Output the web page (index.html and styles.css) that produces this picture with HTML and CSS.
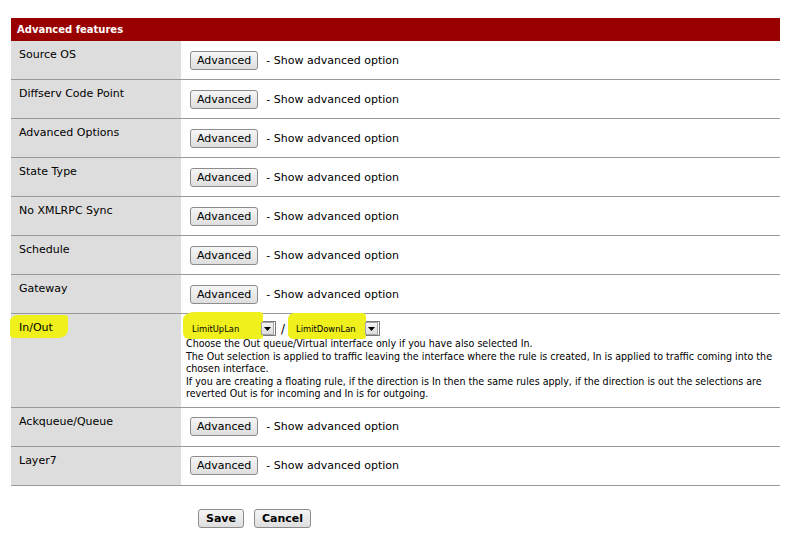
FILE: index.html
```html
<!DOCTYPE html>
<html>
<head>
<meta charset="utf-8">
<title>Advanced features</title>
<link rel="stylesheet" href="styles.css">
</head>
<body>
<div class="page">
  <div class="panel">
    <div class="head">Advanced features</div>

    <div class="row">
      <div class="label">Source OS</div>
      <div class="value"><button class="btn">Advanced</button><span class="hint">- Show advanced option</span></div>
    </div>
    <div class="row">
      <div class="label">Diffserv Code Point</div>
      <div class="value"><button class="btn">Advanced</button><span class="hint">- Show advanced option</span></div>
    </div>
    <div class="row">
      <div class="label">Advanced Options</div>
      <div class="value"><button class="btn">Advanced</button><span class="hint">- Show advanced option</span></div>
    </div>
    <div class="row">
      <div class="label">State Type</div>
      <div class="value"><button class="btn">Advanced</button><span class="hint">- Show advanced option</span></div>
    </div>
    <div class="row">
      <div class="label">No XMLRPC Sync</div>
      <div class="value"><button class="btn">Advanced</button><span class="hint">- Show advanced option</span></div>
    </div>
    <div class="row">
      <div class="label">Schedule</div>
      <div class="value"><button class="btn">Advanced</button><span class="hint">- Show advanced option</span></div>
    </div>
    <div class="row">
      <div class="label">Gateway</div>
      <div class="value"><button class="btn">Advanced</button><span class="hint">- Show advanced option</span></div>
    </div>

    <div class="row row-tall">
      <div class="label label-hl"><span class="hl hl-label"></span><span class="label-text">In/Out</span></div>
      <div class="value value-top">
        <div class="selects">
          <span class="sel sel-1"><span class="hl hl-sel1"></span><span class="sel-text">LimitUpLan</span><span class="sel-arrow"><svg width="7" height="4" viewBox="0 0 7 4"><path d="M0 0H7L3.5 4Z" fill="#000"/></svg></span></span>
          <span class="slash">/</span>
          <span class="sel sel-2"><span class="hl hl-sel2"></span><span class="sel-text">LimitDownLan</span><span class="sel-arrow"><svg width="7" height="4" viewBox="0 0 7 4"><path d="M0 0H7L3.5 4Z" fill="#000"/></svg></span></span>
        </div>
        <div class="desc">Choose the Out queue/Virtual interface only if you have also selected In.<br>The Out selection is applied to traffic leaving the interface where the rule is created, In is applied to traffic coming into the<br>chosen interface.<br>If you are creating a floating rule, if the direction is In then the same rules apply, if the direction is out the selections are<br>reverted Out is for incoming and In is for outgoing.</div>
      </div>
    </div>

    <div class="row">
      <div class="label">Ackqueue/Queue</div>
      <div class="value"><button class="btn">Advanced</button><span class="hint">- Show advanced option</span></div>
    </div>
    <div class="row">
      <div class="label">Layer7</div>
      <div class="value"><button class="btn">Advanced</button><span class="hint">- Show advanced option</span></div>
    </div>

    <div class="actions">
      <button class="btn btn-bold">Save</button>
      <button class="btn btn-bold">Cancel</button>
    </div>
  </div>
</div>
</body>
</html>
```

FILE: styles.css
```css
html, body {
  margin: 0;
  padding: 0;
  background: #ffffff;
}

body {
  font-family: "DejaVu Sans", Verdana, sans-serif;
  font-size: 11px;
  color: #000000;
}

.page {
  padding: 18px 0 0 11px;
}

.panel {
  width: 769px;
}

.head {
  height: 23px;
  line-height: 23px;
  padding-left: 6px;
  background: #990000;
  color: #ffffff;
  font-weight: bold;
  font-size: 10px;
}

.row {
  display: grid;
  grid-template-columns: 170px 1fr;
  min-height: 38px;
  border-bottom: 1px solid #999999;
}

.label {
  background: #dddddd;
  padding: 7px 0 0 8px;
  line-height: 13px;
}

.label-hl {
  position: relative;
  z-index: 0;
}

.label-text {
  position: relative;
}

.value {
  display: flex;
  align-items: center;
  padding-left: 9px;
}

.btn {
  font-family: "DejaVu Sans", Verdana, sans-serif;
  font-size: 11px;
  color: #000000;
  height: 19px;
  padding: 0 6px;
  margin: 0;
  border: 1px solid #8c8c8c;
  border-radius: 3px;
  background: linear-gradient(#f6f6f6, #dedede);
  line-height: 17px;
}

.hint {
  margin-left: 8px;
}

.row-tall .value-top {
  display: block;
  padding: 7px 0 7px 5px;
}

.selects {
  display: flex;
  align-items: center;
  height: 15px;
}

.sel {
  position: relative;
  z-index: 0;
  display: inline-flex;
  align-items: center;
  height: 15px;
  box-sizing: border-box;
  border: 1px solid #7a7a7a;
}

.sel-1 {
  width: 89px;
  margin-left: 1px;
}

.sel-2 {
  width: 89px;
}

.sel-text {
  flex: 1;
  padding-left: 4px;
  font-family: "DejaVu Sans Condensed", "DejaVu Sans", sans-serif;
  font-size: 9.3px;
  line-height: 13px;
}

.sel-arrow {
  width: 11px;
  height: 11px;
  margin-right: 1px;
  border: 1px solid #a5a5a5;
  background: linear-gradient(#f4f4f4, #dcdcdc);
  display: flex;
  align-items: center;
  justify-content: center;
}

.slash {
  margin: 0 6px 0 5px;
  font-size: 12px;
}

.hl {
  position: absolute;
  z-index: -1;
  background: #f0f01c;
}

.hl-label {
  left: -1px;
  top: 1px;
  width: 58px;
  height: 23px;
  border-radius: 8px 3px 10px 4px / 6px 3px 8px 4px;
}

.hl-sel1 {
  left: -5px;
  top: -10px;
  width: 80px;
  height: 27px;
  border-radius: 12px 4px 3px 6px / 8px 3px 3px 6px;
}

.hl-sel2 {
  left: -4px;
  top: -9px;
  width: 78px;
  height: 26px;
  border-radius: 6px 4px 3px 5px;
}

.desc {
  margin-top: 1px;
  font-family: "DejaVu Sans Condensed", "DejaVu Sans", sans-serif;
  font-size: 10.6px;
  line-height: 12.5px;
  white-space: nowrap;
}

.actions {
  padding: 23px 0 0 187px;
  display: flex;
  gap: 10px;
}

.btn-bold {
  font-weight: bold;
  padding: 0 7px;
}
```
